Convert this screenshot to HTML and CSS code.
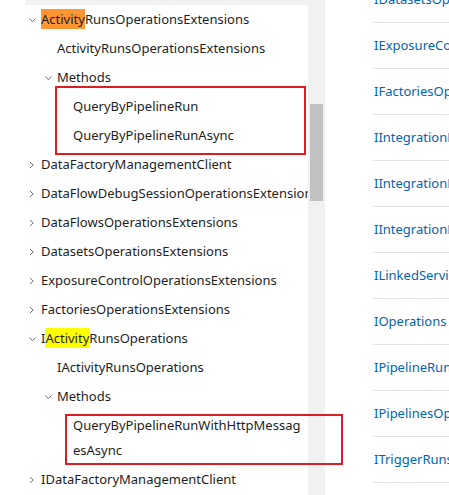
FILE: index.html
```html
<!DOCTYPE html>
<html lang="en">
<head>
<meta charset="utf-8">
<title>Tree</title>
<link rel="stylesheet" href="styles.css">
</head>
<body>
<div class="page">
  <div class="gutter"></div>
  <nav class="tree">
    <ul class="list">
      <li class="row lvl0"><svg class="chev" viewBox="0 0 16 16"><polyline points="4.5,6.5 7.5,9.8 10.5,6.5"/></svg><span class="label"><mark class="hl-active">Activity</mark>RunsOperationsExtensions</span></li>
      <li class="row lvl1 leaf"><span class="label">ActivityRunsOperationsExtensions</span></li>
      <li class="row lvl1"><svg class="chev" viewBox="0 0 16 16"><polyline points="4.5,6.5 7.5,9.8 10.5,6.5"/></svg><span class="label">Methods</span></li>
      <li class="row lvl2 leaf"><span class="label">QueryByPipelineRun</span></li>
      <li class="row lvl2 leaf"><span class="label">QueryByPipelineRunAsync</span></li>
      <li class="row lvl0"><svg class="chev" viewBox="0 0 16 16"><polyline points="5,5 8.2,8 5,11"/></svg><span class="label">DataFactoryManagementClient</span></li>
      <li class="row lvl0"><svg class="chev" viewBox="0 0 16 16"><polyline points="5,5 8.2,8 5,11"/></svg><span class="label">DataFlowDebugSessionOperationsExtensions</span></li>
      <li class="row lvl0"><svg class="chev" viewBox="0 0 16 16"><polyline points="5,5 8.2,8 5,11"/></svg><span class="label">DataFlowsOperationsExtensions</span></li>
      <li class="row lvl0"><svg class="chev" viewBox="0 0 16 16"><polyline points="5,5 8.2,8 5,11"/></svg><span class="label">DatasetsOperationsExtensions</span></li>
      <li class="row lvl0"><svg class="chev" viewBox="0 0 16 16"><polyline points="5,5 8.2,8 5,11"/></svg><span class="label">ExposureControlOperationsExtensions</span></li>
      <li class="row lvl0"><svg class="chev" viewBox="0 0 16 16"><polyline points="5,5 8.2,8 5,11"/></svg><span class="label">FactoriesOperationsExtensions</span></li>
      <li class="row lvl0"><svg class="chev" viewBox="0 0 16 16"><polyline points="4.5,6.5 7.5,9.8 10.5,6.5"/></svg><span class="label">I<mark class="hl">Activity</mark>RunsOperations</span></li>
      <li class="row lvl1 leaf"><span class="label">IActivityRunsOperations</span></li>
      <li class="row lvl1"><svg class="chev" viewBox="0 0 16 16"><polyline points="4.5,6.5 7.5,9.8 10.5,6.5"/></svg><span class="label">Methods</span></li>
      <li class="row lvl2 leaf"><span class="label">QueryByPipelineRunWithHttpMessag<br>esAsync</span></li>
      <li class="row lvl0"><svg class="chev" viewBox="0 0 16 16"><polyline points="5,5 8.2,8 5,11"/></svg><span class="label">IDataFactoryManagementClient</span></li>
    </ul>
  </nav>
  <div class="scrollbar"><div class="thumb"></div></div>
  <main class="content">
    <ul class="links">
      <li class="link-row"><a href="#">IDatasetsOperations</a></li>
      <li class="link-row"><a href="#">IExposureControlOperations</a></li>
      <li class="link-row"><a href="#">IFactoriesOperations</a></li>
      <li class="link-row"><a href="#">IIntegrationRuntimeNodesOperations</a></li>
      <li class="link-row"><a href="#">IIntegrationRuntimeObjectMetadataOperations</a></li>
      <li class="link-row"><a href="#">IIntegrationRuntimesOperations</a></li>
      <li class="link-row"><a href="#">ILinkedServicesOperations</a></li>
      <li class="link-row"><a href="#">IOperations</a></li>
      <li class="link-row"><a href="#">IPipelineRunsOperations</a></li>
      <li class="link-row"><a href="#">IPipelinesOperations</a></li>
      <li class="link-row"><a href="#">ITriggerRunsOperations</a></li>
      <li class="link-row"><a href="#">ITriggersOperations</a></li>
    </ul>
  </main>
  <div class="callout callout-a"></div>
  <div class="callout callout-b"></div>
</div>
</body>
</html>
```
FILE: styles.css
```css
* { box-sizing: border-box; }
html, body {
  margin: 0;
  padding: 0;
  background: #ffffff;
}
body {
  font-family: "Noto Sans", "Open Sans", sans-serif;
  font-size: 13px;
  color: #1e1e1e;
}
.page {
  position: relative;
  display: flex;
  height: 495px;
  overflow: hidden;
}
.gutter {
  width: 25px;
  flex: none;
}
.tree {
  width: 283px;
  flex: none;
  border-top: 5px solid #f2f2f2;
  overflow: hidden;
}
.list {
  list-style: none;
  margin: 0;
  padding: 0;
}
.row {
  display: flex;
  align-items: flex-start;
  padding: 2px 0;
  line-height: 25px;
  white-space: nowrap;
}
.row.lvl1 { padding-left: 16px; }
.row.lvl2 { padding-left: 32px; }
.row.leaf .label { margin-left: 16px; }
.chev {
  width: 16px;
  height: 16px;
  flex: none;
  margin-top: 4.5px;
  fill: none;
  stroke: #6e6e6e;
  stroke-width: 1;
}
.label {
  white-space: nowrap;
}
mark {
  color: inherit;
  display: inline-block;
  line-height: 20px;
}
.hl-active { background: #ff9632; }
.hl { background: #ffff00; }
.callout {
  position: absolute;
  border: 2px solid #dc1e23;
  pointer-events: none;
}
.callout-a {
  left: 55px;
  top: 86px;
  width: 251px;
  height: 69px;
}
.callout-b {
  left: 65px;
  top: 414px;
  width: 278px;
  height: 51px;
}
.scrollbar {
  width: 17px;
  flex: none;
  background: #f1f1f1;
  padding: 104px 2px 0;
}
.thumb {
  height: 97px;
  background: #c1c1c1;
}
.content {
  flex: 1;
  min-width: 0;
  padding-left: 48px;
  overflow: hidden;
}
.links {
  list-style: none;
  margin: -23px 0 0;
  padding: 0;
}
.link-row {
  height: 46px;
  line-height: 45px;
  border-bottom: 1px solid #e4e4e4;
  white-space: nowrap;
  padding-left: 1px;
}
.link-row a {
  color: #0065b3;
  text-decoration: none;
}
```
